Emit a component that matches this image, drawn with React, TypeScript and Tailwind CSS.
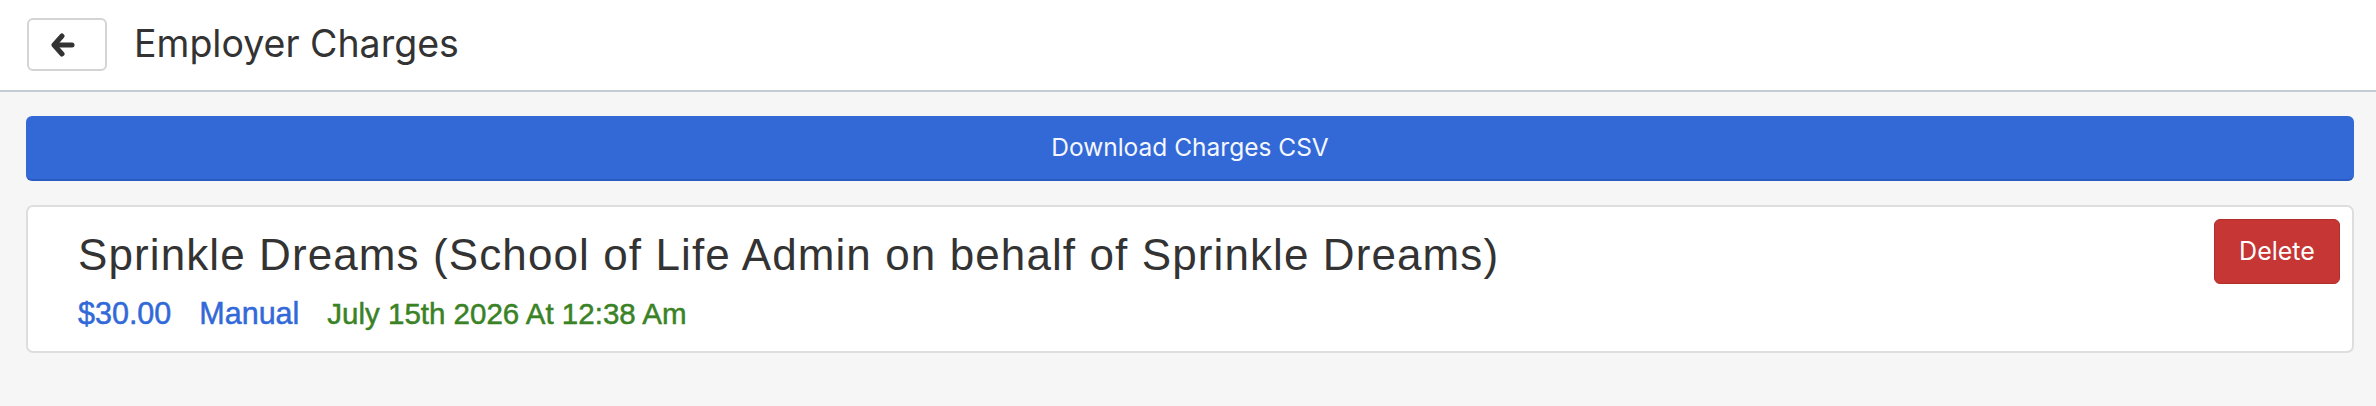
import React from "react";

function BackArrow() {
  return (
    <svg width="24" height="26" viewBox="0 0 24 26" fill="none" stroke="currentColor" strokeLinecap="round" strokeLinejoin="round">
      <path d="M11 4 L3 13 L11 22" strokeWidth="5" />
      <path d="M4 13 L21 13" strokeWidth="5" />
    </svg>
  );
}

export default function App() {
  return (
    <div className="min-h-[406px] bg-[#f6f6f6] font-['Inter',sans-serif]">
      <header className="flex h-[92px] items-start gap-[27px] border-b-2 border-[#c3ccd4] bg-white pl-[27px] pt-[18px]">
        <button className="flex h-[53px] w-[80px] items-center justify-center rounded-[6px] border-2 border-[#d4d4d4] bg-white pr-[8px] pt-[1px] text-[#333]">
          <BackArrow />
        </button>
        <h1 className="mt-[2px] text-[37.5px] leading-[48px] font-normal text-[#333]">
          Employer Charges
        </h1>
      </header>
      <main className="flex flex-col gap-[24px] pt-[24px] pb-[24px] pl-[26px] pr-[22px]">
        <button className="flex h-[65px] w-full items-center justify-center rounded-[6px] border-b-2 border-[#2a5bc2] bg-[#3369d7] text-[24.5px] text-[#f4f7ff]">
          Download Charges CSV
        </button>
        <div className="flex h-[148px] items-start justify-between rounded-[7px] border-2 border-[#dedede] bg-white pl-[50px] pr-[12px] pt-[12px]">
          <div className="flex flex-col pt-[10px] font-['Liberation_Sans',sans-serif]">
            <div className="text-[44px] leading-[52px] tracking-[1.1px] text-[#333]">
              Sprinkle Dreams (School of Life Admin on behalf of Sprinkle Dreams)
            </div>
            <div className="mt-[14px] flex items-baseline gap-[28px] leading-[36px] [-webkit-text-stroke:0.5px_currentColor]">
              <span className="text-[30.5px] text-[#3169d8]">$30.00</span>
              <span className="text-[30.5px] text-[#3169d8]">Manual</span>
              <span className="text-[29.5px] text-[#3a8226]">July 15th 2026 At 12:38 Am</span>
            </div>
          </div>
          <button className="flex h-[65px] w-[126px] items-center justify-center rounded-[6px] border border-[#b12e2c] bg-[#c53634] text-[25px] text-white">
            Delete
          </button>
        </div>
      </main>
    </div>
  );
}
